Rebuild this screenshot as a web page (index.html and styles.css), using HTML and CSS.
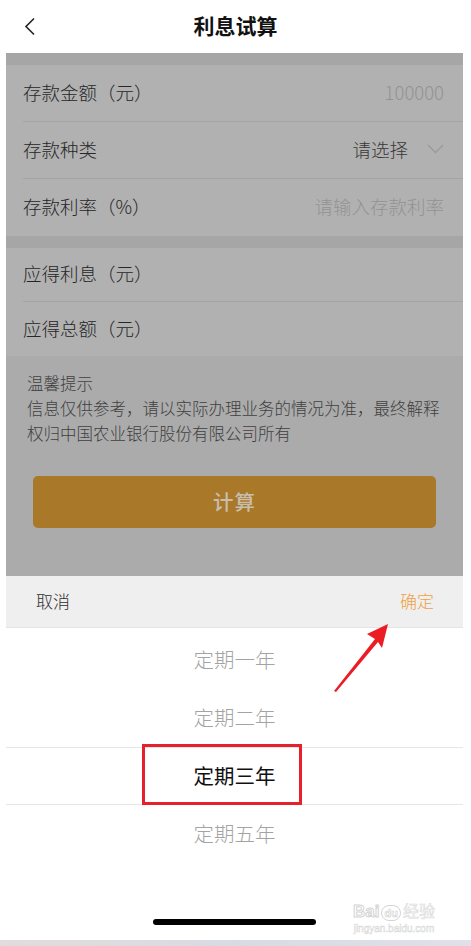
FILE: index.html
```html
<!DOCTYPE html>
<html lang="zh-CN">
<head>
    <meta charset="UTF-8">
    <meta name="viewport" content="width=device-width, initial-scale=1.0">
    <title>利息试算</title>
    <link rel="stylesheet" href="styles.css">
</head>
<body>
    <div class="page">
        <!-- 顶部导航 -->
        <div class="nav">
            <svg class="back" width="12" height="19" viewBox="0 0 12 19">
                <path d="M10 1.5 L2 9.5 L10 17.5" fill="none" stroke="#222" stroke-width="1.6"/>
            </svg>
            <div class="title">利息试算</div>
        </div>

        <div class="screen">
            <div class="band"></div>
            <div class="group">
                <div class="row">
                    <span class="label">存款金额（元）</span>
                    <span class="value muted">100000</span>
                </div>
                <div class="row">
                    <span class="label">存款种类</span>
                    <span class="value">请选择
                        <svg class="arrow-down" width="17" height="10" viewBox="0 0 17 10">
                            <path d="M1 1 L8.5 8.5 L16 1" fill="none" stroke="#999" stroke-width="1.3"/>
                        </svg>
                    </span>
                </div>
                <div class="row">
                    <span class="label">存款利率（%）</span>
                    <span class="value muted">请输入存款利率</span>
                </div>
            </div>
            <div class="band"></div>
            <div class="group">
                <div class="row short">
                    <span class="label">应得利息（元）</span>
                </div>
                <div class="row short">
                    <span class="label">应得总额（元）</span>
                </div>
            </div>

            <div class="tips">
                <p>温馨提示</p>
                <p>信息仅供参考，请以实际办理业务的情况为准，最终解释权归中国农业银行股份有限公司所有</p>
                <button class="calc">计算</button>
            </div>

            <!-- 选择器 -->
            <div class="picker-bar">
                <span class="cancel">取消</span>
                <span class="ok">确定</span>
            </div>
            <div class="picker-list">
                <div class="item">定期一年</div>
                <div class="item">定期二年</div>
                <div class="item selected">定期三年<span class="mark"></span></div>
                <div class="item">定期五年</div>
            </div>
            <div class="home-bar"></div>
        </div>

        <div class="bottom-strip"></div>

        <!-- 标注箭头 -->
        <svg class="pointer" width="62" height="76" viewBox="0 0 62 76">
            <polygon points="58,6 37,16 45,21 4,73 6,74 48,24 52,30" fill="#ec1c24"/>
        </svg>

        <div class="watermark">
            <div class="wm-logo">Bai<span class="paw">du</span><span class="wm-cn">经验</span></div>
            <div class="wm-url">jingyan.baidu.com</div>
        </div>
    </div>
</body>
</html>
```

FILE: styles.css
```css
/* 整体 */
body {
    margin: 0;
    background: #fff;
    font-family: "Noto Sans CJK SC", "Noto Sans", sans-serif;
    font-weight: 300;
}

.page {
    position: relative;
    width: 471px;
    height: 946px;
    overflow: hidden;
    background: #fff;
}

/* 导航栏 */
.nav {
    height: 53px;
    display: flex;
    align-items: center;
    justify-content: center;
    position: relative;
}

.back {
    position: absolute;
    left: 24px;
    top: 17px;
}

.title {
    font-size: 21px;
    font-weight: 700;
    color: #111;
    margin-top: -3px;
}

/* 遮罩下的内容 */
.screen {
    margin: 0 8px 0 6px;
}

.band {
    height: 12px;
    background: #a6a6a6;
}

.group {
    background: #b1b1b1;
}

.row {
    height: 57px;
    margin-left: 17px;
    padding: 0 19px 3px 0;
    display: flex;
    align-items: center;
    justify-content: space-between;
    border-bottom: 1px solid #a4a4a4;
    box-sizing: border-box;
    font-size: 18.5px;
}

.row:last-child {
    border-bottom: none;
}

.row.short {
    height: 54px;
}

.label {
    color: #262626;
}

.value {
    color: #383838;
    display: flex;
    align-items: center;
}

.value.muted {
    color: #939393;
}

.arrow-down {
    margin-left: 19px;
}

/* 温馨提示 */
.tips {
    background: #ababab;
    padding: 15px 21px 48px 21px;
    height: 220px;
    box-sizing: border-box;
    font-size: 16.5px;
    line-height: 25px;
    color: #404040;
}

.tips p {
    margin: 0;
}

.calc {
    display: block;
    width: 403px;
    height: 52px;
    margin: 30px 0 0 6px;
    padding-bottom: 3px;
    border: none;
    border-radius: 5px;
    background: #a97828;
    color: #c8bead;
    font-family: inherit;
    font-size: 20.5px;
    font-weight: 500;
    letter-spacing: 1px;
}

/* 选择器 */
.picker-bar {
    height: 52px;
    background: #efefef;
    border-bottom: 1px solid #e4e4e4;
    box-sizing: border-box;
    display: flex;
    align-items: center;
    justify-content: space-between;
    padding: 0 29px 2px 30px;
    font-size: 17px;
}

.cancel {
    color: #2e2e2e;
}

.ok {
    color: #eea043;
}

.picker-list {
    padding-top: 3px;
}

.item {
    position: relative;
    height: 58px;
    display: flex;
    align-items: center;
    justify-content: center;
    padding-bottom: 2px;
    box-sizing: border-box;
    font-size: 20.5px;
    color: #a3a3a3;
}

.item.selected {
    color: #111;
    font-weight: 400;
    border-top: 1px solid #e6e6e6;
    border-bottom: 1px solid #e6e6e6;
}

.mark {
    position: absolute;
    left: 136px;
    top: -4px;
    width: 154px;
    height: 55px;
    border: 3px solid #e6212b;
}

.home-bar {
    width: 163px;
    height: 6px;
    margin: 56px 0 0 147px;
    border-radius: 3px;
    background: #000;
}

.bottom-strip {
    position: absolute;
    left: 0;
    right: 0;
    bottom: 0;
    height: 6px;
    background: linear-gradient(90deg, #e2dcdc, #d9dbe3 50%, #dfe0e8);
}

/* 标注 */
.pointer {
    position: absolute;
    left: 330px;
    top: 618px;
}

.watermark {
    position: absolute;
    left: 353px;
    top: 900px;
    color: #fff;
    text-align: center;
}

.wm-logo {
    font-family: "Liberation Sans", sans-serif;
    font-size: 17px;
    font-weight: 700;
    line-height: 20px;
    -webkit-text-stroke: 1px #d4d4d4;
}

.wm-cn {
    font-family: "Noto Sans CJK SC", sans-serif;
    font-size: 16px;
    font-weight: 400;
    color: #fff;
    -webkit-text-stroke: 0.6px #dadada;
}

.paw {
    display: inline-block;
    font-size: 11px;
    line-height: 14px;
    padding: 0 2px;
    margin: 0 2px;
    border: 1px solid #d4d4d4;
    border-radius: 8px;
    -webkit-text-stroke: 0.6px #cfcfcf;
}

.wm-url {
    font-family: "Liberation Sans", sans-serif;
    font-size: 10px;
    line-height: 14px;
    color: #fff;
    -webkit-text-stroke: 0.5px #d6d6d6;
}
```
